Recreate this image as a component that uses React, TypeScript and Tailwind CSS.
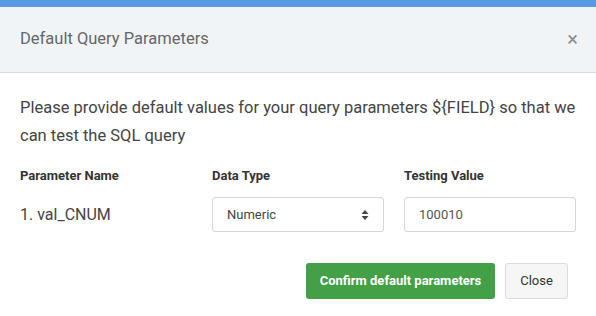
import React from "react";

export default function App() {
  return (
    <div className="w-[596px] h-[316px] bg-white overflow-hidden" style={{ fontFamily: "Roboto, 'Liberation Sans', sans-serif" }}>
      <div className="h-[7px] bg-[#5899e0]" />
      <div className="h-[66px] bg-[#f1f4f7] border-b border-[#d5dae0] flex items-center justify-between pl-[20px] pr-[18px]">
        <div className="text-[16.5px] text-[#666] leading-none pb-[1px]">Default Query Parameters</div>
        <div className="text-[20px] text-[#8a8a8a] leading-none pb-[2px]">×</div>
      </div>
      <div className="px-[20px] pt-[21px]">
        <p className="text-[16.5px] leading-[28px] text-[#444] whitespace-nowrap">
          Please provide default values for your query parameters ${"{"}FIELD{"}"} so that we
          <br />
          can test the SQL query
        </p>
        <div className="grid grid-cols-[172px_172px_172px] gap-x-[20px] mt-[18px] w-[557px]">
          <div className="text-[13px] font-bold text-[#333] leading-[16px]">Parameter Name</div>
          <div className="text-[13px] font-bold text-[#333] leading-[16px]">Data Type</div>
          <div className="text-[13px] font-bold text-[#333] leading-[16px]">Testing Value</div>
          <div className="mt-[13px] h-[35px] flex items-center text-[16px] text-[#444]">1. val_CNUM</div>
          <div className="mt-[13px] h-[35px] border border-[#d6d6d6] rounded-[3px] flex items-center justify-between pl-[14px] pr-[14px] text-[13px] text-[#444]">
            <span>Numeric</span>
            <svg width="8" height="12" viewBox="0 0 8 12" fill="#444">
              <path d="M4 1 L7.5 5 L0.5 5 Z" />
              <path d="M4 11 L7.5 7 L0.5 7 Z" />
            </svg>
          </div>
          <div className="mt-[13px] h-[35px] border border-[#d6d6d6] rounded-[3px] flex items-center pl-[14px] text-[13px] text-[#555]">100010</div>
        </div>
        <div className="flex justify-end gap-[10px] mt-[31px] pr-[8px]">
          <button className="h-[36px] w-[189px] bg-[#43a047] text-white text-[13px] font-bold rounded-[3px]">Confirm default parameters</button>
          <button className="h-[36px] w-[63px] bg-[#f6f6f6] border border-[#dcdcdc] text-[#333] text-[13px] rounded-[3px]">Close</button>
        </div>
      </div>
    </div>
  );
}
